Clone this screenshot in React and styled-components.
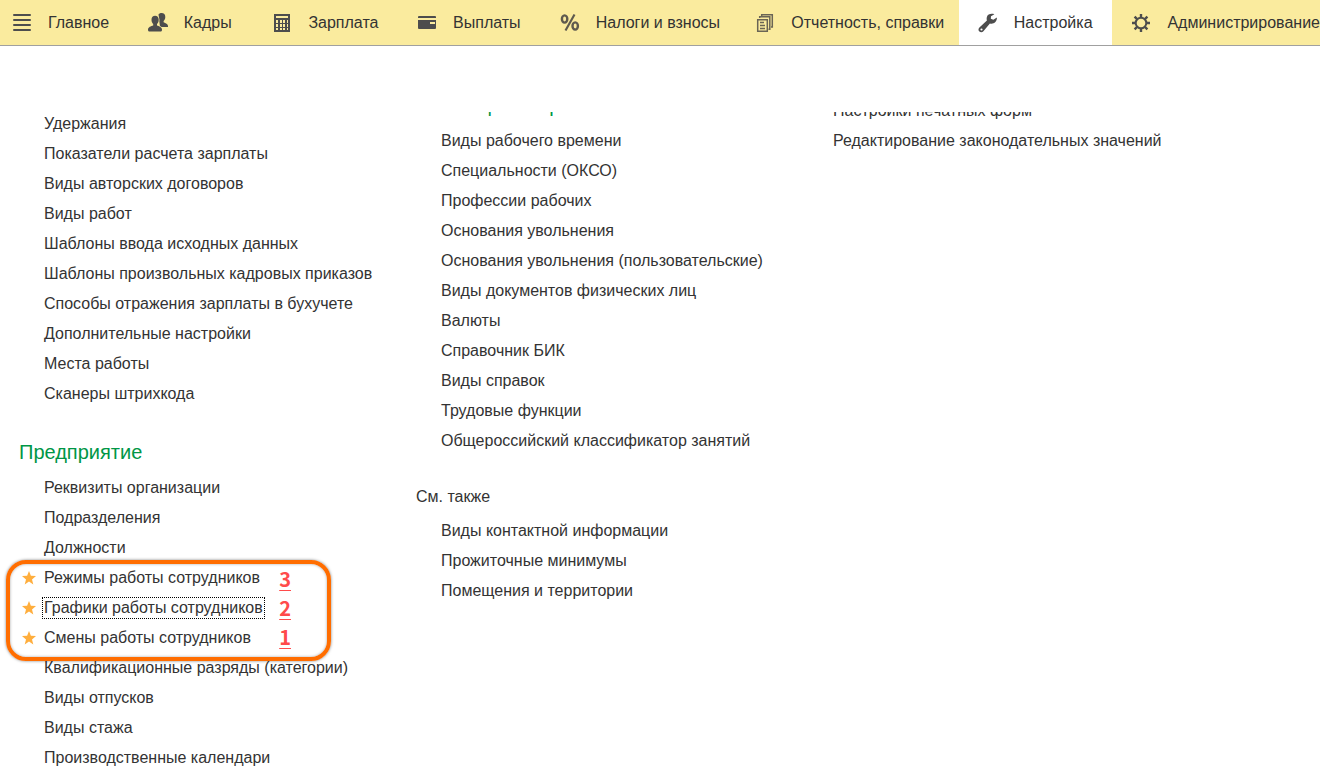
import React from "react";
import styled, { createGlobalStyle } from "styled-components";

const Global = createGlobalStyle`
  * { box-sizing: border-box; }
  body {
    margin: 0;
    background: #fff;
    color: #333;
    font-family: "Liberation Sans", Arial, sans-serif;
    font-size: 16px;
  }
`;

const Page = styled.div`
  min-height: 100vh;
  overflow: hidden;
`;

const TopBar = styled.nav`
  display: grid;
  grid-template-columns:
    minmax(max-content, 129fr) minmax(max-content, 125fr)
    minmax(max-content, 145fr) minmax(max-content, 143fr)
    minmax(max-content, 196fr) minmax(max-content, 223fr)
    minmax(max-content, 154fr) minmax(max-content, 205fr);
  height: 46px;
  background: #faeb9e;
  border-bottom: 1px solid #a0a0a0;
`;

const Tab = styled.a`
  display: flex;
  align-items: center;
  gap: 16px;
  padding-left: ${(p) => (p.$first ? 12 : 19)}px;
  color: #333;
  text-decoration: none;
  white-space: nowrap;
  background: ${(p) => (p.$active ? "#fff" : "transparent")};
`;

const Icon = styled.svg`
  display: block;
  flex: none;
  width: 20px;
  height: 20px;
  fill: #4d4d4d;
`;

const Viewport = styled.main`
  margin-top: 66px;
  overflow: hidden;
`;

const Columns = styled.div`
  display: grid;
  grid-template-columns: 397fr 392fr 512fr;
  margin-top: -28px;
  padding-left: 19px;
`;

const Column = styled.div`
  padding-top: ${(p) => p.$top}px;
`;

const Section = styled.section`
  margin-top: ${(p) => p.$gap || 0}px;
`;

const Heading = styled.h2`
  margin: 0;
  height: 42px;
  line-height: 42px;
  font-size: 20px;
  font-weight: 400;
  color: #009646;
`;

const PlainHeading = styled.h3`
  margin: 0;
  height: 34px;
  line-height: 30px;
  font-size: 16px;
  font-weight: 400;
`;

const List = styled.ul`
  margin: 0;
  padding: 0 0 0 25px;
  list-style: none;
`;

const Item = styled.li`
  display: flex;
  align-items: center;
  height: 30px;
`;

const ItemLink = styled.a`
  color: #333;
  text-decoration: none;
  white-space: nowrap;
  line-height: 18px;
  outline: ${(p) => (p.$focused ? "1px dotted #000" : "none")};
  outline-offset: 1px;
`;

const Marked = styled.div`
  position: relative;
`;

const Frame = styled.div`
  position: absolute;
  z-index: 1;
  top: -3px;
  left: -13px;
  display: flex;
  flex-direction: column;
  align-items: flex-end;
  width: 325px;
  height: 101px;
  padding-right: 36px;
  border: 4px solid #ff6d00;
  border-radius: 20px;
  box-shadow: 0 0 3px rgba(0, 0, 0, 0.5), inset 0 0 3px rgba(0, 0, 0, 0.35);
  pointer-events: none;
`;

const MarkedRow = styled(Item)`
  margin-left: -22px;
`;

const Star = styled.svg`
  flex: none;
  width: 14px;
  height: 14px;
  margin-right: 8px;
  fill: #ffae3d;
`;

const Digit = styled.span`
  color: #ff4b4b;
  font-family: "Noto Sans CJK SC", sans-serif;
  font-size: 20px;
  font-weight: 700;
  line-height: 29px;
  text-decoration: underline;
  text-decoration-thickness: 1px;
  text-underline-offset: 3px;
`;

const icons = {
  menu: (
    <g>
      <rect x="1" y="1" width="18" height="2" rx="1" />
      <rect x="1" y="6" width="18" height="2" rx="1" />
      <rect x="1" y="11" width="18" height="2" rx="1" />
      <rect x="1" y="16" width="18" height="2" rx="1" />
    </g>
  ),
  people: (
    <g>
      <path d="M10.500 1.500C11.200.5 12.200 0 13.500 0c2.500 0 3.800 1.500 3.800 4 0 1.800-.7 3.100-1.700 4v1.300c1.700.9 4.400 1.500 4.400 3.900V14h-8z" />
      <path
        stroke="#faeb9e"
        strokeWidth="1.400"
        paintOrder="stroke"
        d="M3.500 6.800C3.500 4.200 4.900 2.800 7.100 2.800s3.600 1.400 3.600 4c0 2-.7 3.400-1.700 4.300v1.300c2 .8 5 1.400 5 4.300 0 1.200-.5 1.800-1.500 1.800h-11C.5 18.500 0 17.900 0 16.700c0-2.900 3-3.500 5.200-4.300v-1.300c-.9-.9-1.700-2.300-1.700-4.300z"
      />
    </g>
  ),
  calc: (
    <path
      fillRule="evenodd"
      d="M2 1h16v18H2zM4 3v2h12V3zM4 7v3h2V7zM8 7v3h2V7zM11 7v3h2V7zM15 7v3h1V7zM4 11v3h2v-3zM8 11v3h2v-3zM11 11v3h2v-3zM15 11v3h1v-3zM4 15v2h2v-2zM8 15v2h2v-2zM11 15v2h2v-2zM15 15v2h1v-2z"
    />
  ),
  card: (
    <path
      fillRule="evenodd"
      d="M2 3h16q1 0 1 1v1H1V4q0-1 1-1zM1 7h18v8q0 1-1 1H2q-1 0-1-1zM13 9v2h5V9z"
    />
  ),
  percent: (
    <g fill="none" stroke="#5e5a4e" strokeWidth="2.400">
      <ellipse cx="4.600" cy="6" rx="2.700" ry="3.600" />
      <ellipse cx="15.200" cy="13" rx="2.700" ry="3.600" />
      <path d="M14.500 1.500l-9 16" strokeWidth="2.200" />
    </g>
  ),
  papers: (
    <g fill="none" stroke="#6a6555" strokeWidth="1.500">
      <path d="M6.700 3V1.700h10.600V14H16" />
      <path d="M4.700 5V3.700h10.100V16.300h-1.300" />
      <path d="M2.700 6.700h9.600v11.600H2.700z" />
      <path d="M5 9.500h4M5 12.500h5M5 15.500h5" />
    </g>
  ),
  wrench: (
    <path d="M18.900 4.600l-3.600 2.200-2.500-1 .2-2.600 3.400-1.900C13.500.2 9.600 1 8.800 4.200c-.3 1.300-.2 2.300.1 3.300L1.400 14.400c-1.200 1.200-1.200 3 0 4.100 1.100 1 2.900 1 4-.3l6.500-7.700c3.500 1 7.300-1.500 7-5.900zM3.500 15.400a1.100 1.100 0 110 2.200 1.100 1.100 0 010-2.200z" />
  ),
  gear: (
    <g fill="none" stroke="#4d4d4d">
      <circle cx="10" cy="10" r="5.300" strokeWidth="2" />
      <path
        strokeWidth="2.400"
        d="M10 1v3.500M10 15.500V19M1 10h3.500M15.500 10H19M3.600 3.600l2.500 2.500M13.900 13.900l2.500 2.500M3.600 16.400l2.500-2.500M13.900 6.100l2.500-2.500"
      />
    </g>
  ),
};

const tabs = [
  ["menu", "Главное"],
  ["people", "Кадры"],
  ["calc", "Зарплата"],
  ["card", "Выплаты"],
  ["percent", "Налоги и взносы"],
  ["papers", "Отчетность, справки"],
  ["wrench", "Настройка"],
  ["gear", "Администрирование"],
];

const salary = [
  "Удержания",
  "Показатели расчета зарплаты",
  "Виды авторских договоров",
  "Виды работ",
  "Шаблоны ввода исходных данных",
  "Шаблоны произвольных кадровых приказов",
  "Способы отражения зарплаты в бухучете",
  "Дополнительные настройки",
  "Места работы",
  "Сканеры штрихкода",
];

const company = ["Реквизиты организации", "Подразделения", "Должности"];

const favourites = [
  ["Режимы работы сотрудников", "3"],
  ["Графики работы сотрудников", "2"],
  ["Смены работы сотрудников", "1"],
];

const companyMore = [
  "Квалификационные разряды (категории)",
  "Виды отпусков",
  "Виды стажа",
  "Производственные календари",
];

const classifiers = [
  "Виды рабочего времени",
  "Специальности (ОКСО)",
  "Профессии рабочих",
  "Основания увольнения",
  "Основания увольнения (пользовательские)",
  "Виды документов физических лиц",
  "Валюты",
  "Справочник БИК",
  "Виды справок",
  "Трудовые функции",
  "Общероссийский классификатор занятий",
];

const seeAlso = [
  "Виды контактной информации",
  "Прожиточные минимумы",
  "Помещения и территории",
];

const service = [
  "Настройки печатных форм",
  "Редактирование законодательных значений",
];

function Links({ items }) {
  return (
    <List>
      {items.map((text) => (
        <Item key={text}>
          <ItemLink href="#">{text}</ItemLink>
        </Item>
      ))}
    </List>
  );
}

function Favourites() {
  return (
    <Marked>
      <List>
        {favourites.map(([text, digit]) => (
          <MarkedRow key={text}>
            <Star viewBox="0 0 14 14" aria-hidden="true">
              <path d="M7 0l1.900 4.800 5.100.3-4 3.300 1.300 5L7 10.600l-4.300 2.800 1.300-5L0 5.100l5.100-.3z" />
            </Star>
            <ItemLink href="#" $focused={digit === "2"}>
              {text}
            </ItemLink>
          </MarkedRow>
        ))}
      </List>
      <Frame>
        {favourites.map(([, digit]) => (
          <Digit key={digit}>{digit}</Digit>
        ))}
      </Frame>
    </Marked>
  );
}

export default function App() {
  return (
    <Page>
      <Global />
      <TopBar>
        {tabs.map(([icon, label], i) => (
          <Tab key={label} href="#" $first={i === 0} $active={icon === "wrench"}>
            <Icon viewBox="0 0 20 20" aria-hidden="true">
              {icons[icon]}
            </Icon>
            {label}
          </Tab>
        ))}
      </TopBar>
      <Viewport>
        <Columns>
          <Column $top={25}>
            <Section>
              <Links items={salary} />
            </Section>
            <Section $gap={22}>
              <Heading>Предприятие</Heading>
              <Links items={company} />
              <Favourites />
              <Links items={companyMore} />
            </Section>
          </Column>
          <Column $top={0}>
            <Section>
              <Heading>Классификаторы</Heading>
              <Links items={classifiers} />
            </Section>
            <Section $gap={26}>
              <PlainHeading>См. также</PlainHeading>
              <Links items={seeAlso} />
            </Section>
          </Column>
          <Column $top={12}>
            <Section>
              <Links items={service} />
            </Section>
          </Column>
        </Columns>
      </Viewport>
    </Page>
  );
}
